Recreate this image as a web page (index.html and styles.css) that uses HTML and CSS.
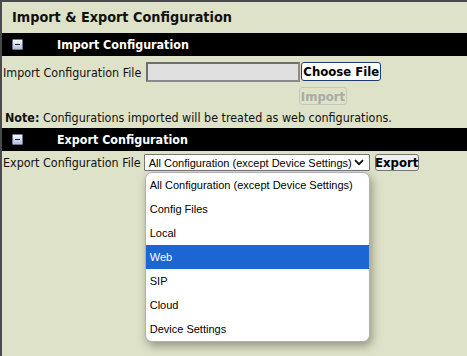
FILE: index.html
```html
<!DOCTYPE html>
<html>
<head>
<meta charset="utf-8">
<link rel="stylesheet" href="styles.css">
</head>
<body>
<div class="page">
  <h1 class="title">Import &amp; Export Configuration</h1>

  <div class="bar">
    <span class="toggle"><span class="minus"></span></span>
    <span class="bar-label">Import Configuration</span>
  </div>
  <div class="row row-import">
    <span class="label">Import Configuration File</span>
    <span class="file-field"></span>
    <span class="btn btn-choose">Choose File</span>
  </div>
  <div class="row row-action">
    <span class="btn btn-disabled">Import</span>
  </div>
  <p class="note"><b>Note:</b> Configurations imported will be treated as web configurations.</p>

  <div class="bar">
    <span class="toggle"><span class="minus"></span></span>
    <span class="bar-label">Export Configuration</span>
  </div>
  <div class="row row-export">
    <span class="label">Export Configuration File</span>
    <span class="select-wrap">
      <span class="select">
        <span class="select-text">All Configuration (except Device Settings)</span>
        <svg class="chev" width="10" height="7" viewBox="0 0 10 7"><path d="M1 1.2 L5 5.2 L9 1.2" fill="none" stroke="#111" stroke-width="1.8"/></svg>
      </span>
      <div class="dropdown">
        <div class="opt">All Configuration (except Device Settings)</div>
        <div class="opt">Config Files</div>
        <div class="opt">Local</div>
        <div class="opt opt-active">Web</div>
        <div class="opt">SIP</div>
        <div class="opt">Cloud</div>
        <div class="opt">Device Settings</div>
      </div>
    </span>
    <span class="btn btn-export">Export</span>
  </div>
</div>
</body>
</html>
```

FILE: styles.css
```css
html, body {
  margin: 0;
  padding: 0;
}
body {
  background: #dee2c8;
  font-family: "DejaVu Sans Condensed", "DejaVu Sans", Verdana, sans-serif;
  color: #000;
}
.page {
  box-sizing: border-box;
  min-height: 356px;
  border-top: 2px solid #4a4a4a;
  border-left: 2px solid #4a4a4a;
}
.title {
  margin: 0;
  height: 31px;
  box-sizing: border-box;
  padding: 7px 0 0 10px;
  font-size: 14.3px;
  font-weight: bold;
  color: #111;
  line-height: 16px;
  white-space: nowrap;
}
.bar {
  background: #000;
  height: 23px;
  display: flex;
  align-items: center;
}
.toggle {
  margin-left: 10px;
  width: 11px;
  height: 11px;
  box-sizing: border-box;
  border: 1px solid #6b7894;
  border-radius: 1px;
  background: linear-gradient(#f4f7fc, #b7c2d6);
  display: flex;
  align-items: center;
  justify-content: center;
  margin-top: -1px;
}
.minus {
  width: 5px;
  height: 1px;
  background: #1a2340;
}
.bar-label {
  margin-left: 34px;
  color: #fff;
  font-weight: bold;
  font-size: 12.4px;
  white-space: nowrap;
}
.row {
  display: flex;
  align-items: center;
}
.label {
  font-size: 12.4px;
  color: #111;
  white-space: nowrap;
}
.row-import {
  padding: 6px 0 0 1px;
  height: 20px;
}
.file-field {
  margin-left: 5px;
  width: 154px;
  height: 20px;
  box-sizing: border-box;
  background: #e0e0e0;
  border: 2px solid #6e6e6e;
  border-right-color: #8a8a8a;
  border-bottom-color: #8a8a8a;
}
.btn {
  font-weight: bold;
  box-sizing: border-box;
  display: inline-flex;
  align-items: center;
  justify-content: center;
  border-radius: 3px;
  white-space: nowrap;
}
.btn-choose {
  margin-left: 1px;
  margin-top: -1px;
  width: 80px;
  height: 19px;
  background: #fff;
  border: 1px solid #1e3c6e;
  font-size: 13px;
}
.row-action {
  padding-left: 297px;
  margin-top: 5px;
}
.btn-disabled {
  width: 48px;
  height: 18px;
  border: 1px solid #c6c8bd;
  color: #a9aaa3;
  background: transparent;
  font-size: 13px;
}
.note {
  margin: 4px 0 0 3px;
  font-size: 12.4px;
  height: 19px;
  line-height: 17px;
  color: #111;
  white-space: nowrap;
}
.row-export {
  padding: 3px 0 0 1px;
  height: 17px;
}
.select-wrap {
  position: relative;
  margin-left: 3px;
}
.select {
  display: flex;
  align-items: center;
  width: 226px;
  height: 17px;
  box-sizing: border-box;
  background: #fff;
  border: 1px solid #767676;
  border-radius: 1px;
  padding-left: 4px;
  font-family: "Liberation Sans", Arial, sans-serif;
  font-size: 11px;
}
.select-text {
  flex: 1;
  white-space: nowrap;
}
.chev {
  margin-right: 5px;
}
.btn-export {
  margin-left: 5px;
  width: 44px;
  height: 17px;
  background: #efefef;
  border: 1px solid #767676;
  font-size: 13px;
}
.dropdown {
  position: absolute;
  left: 1px;
  top: 18px;
  width: 225px;
  box-sizing: border-box;
  background: #fff;
  border: 1px solid #b0b0b0;
  border-radius: 7px;
  box-shadow: 2px 4px 10px rgba(60, 60, 40, 0.45);
  overflow: hidden;
  font-family: "Liberation Sans", Arial, sans-serif;
  font-size: 11px;
}
.opt {
  height: 24px;
  line-height: 24px;
  padding-left: 4px;
  color: #000;
  white-space: nowrap;
}
.opt-active {
  background: #1b66d2;
  color: #fff;
}
```
